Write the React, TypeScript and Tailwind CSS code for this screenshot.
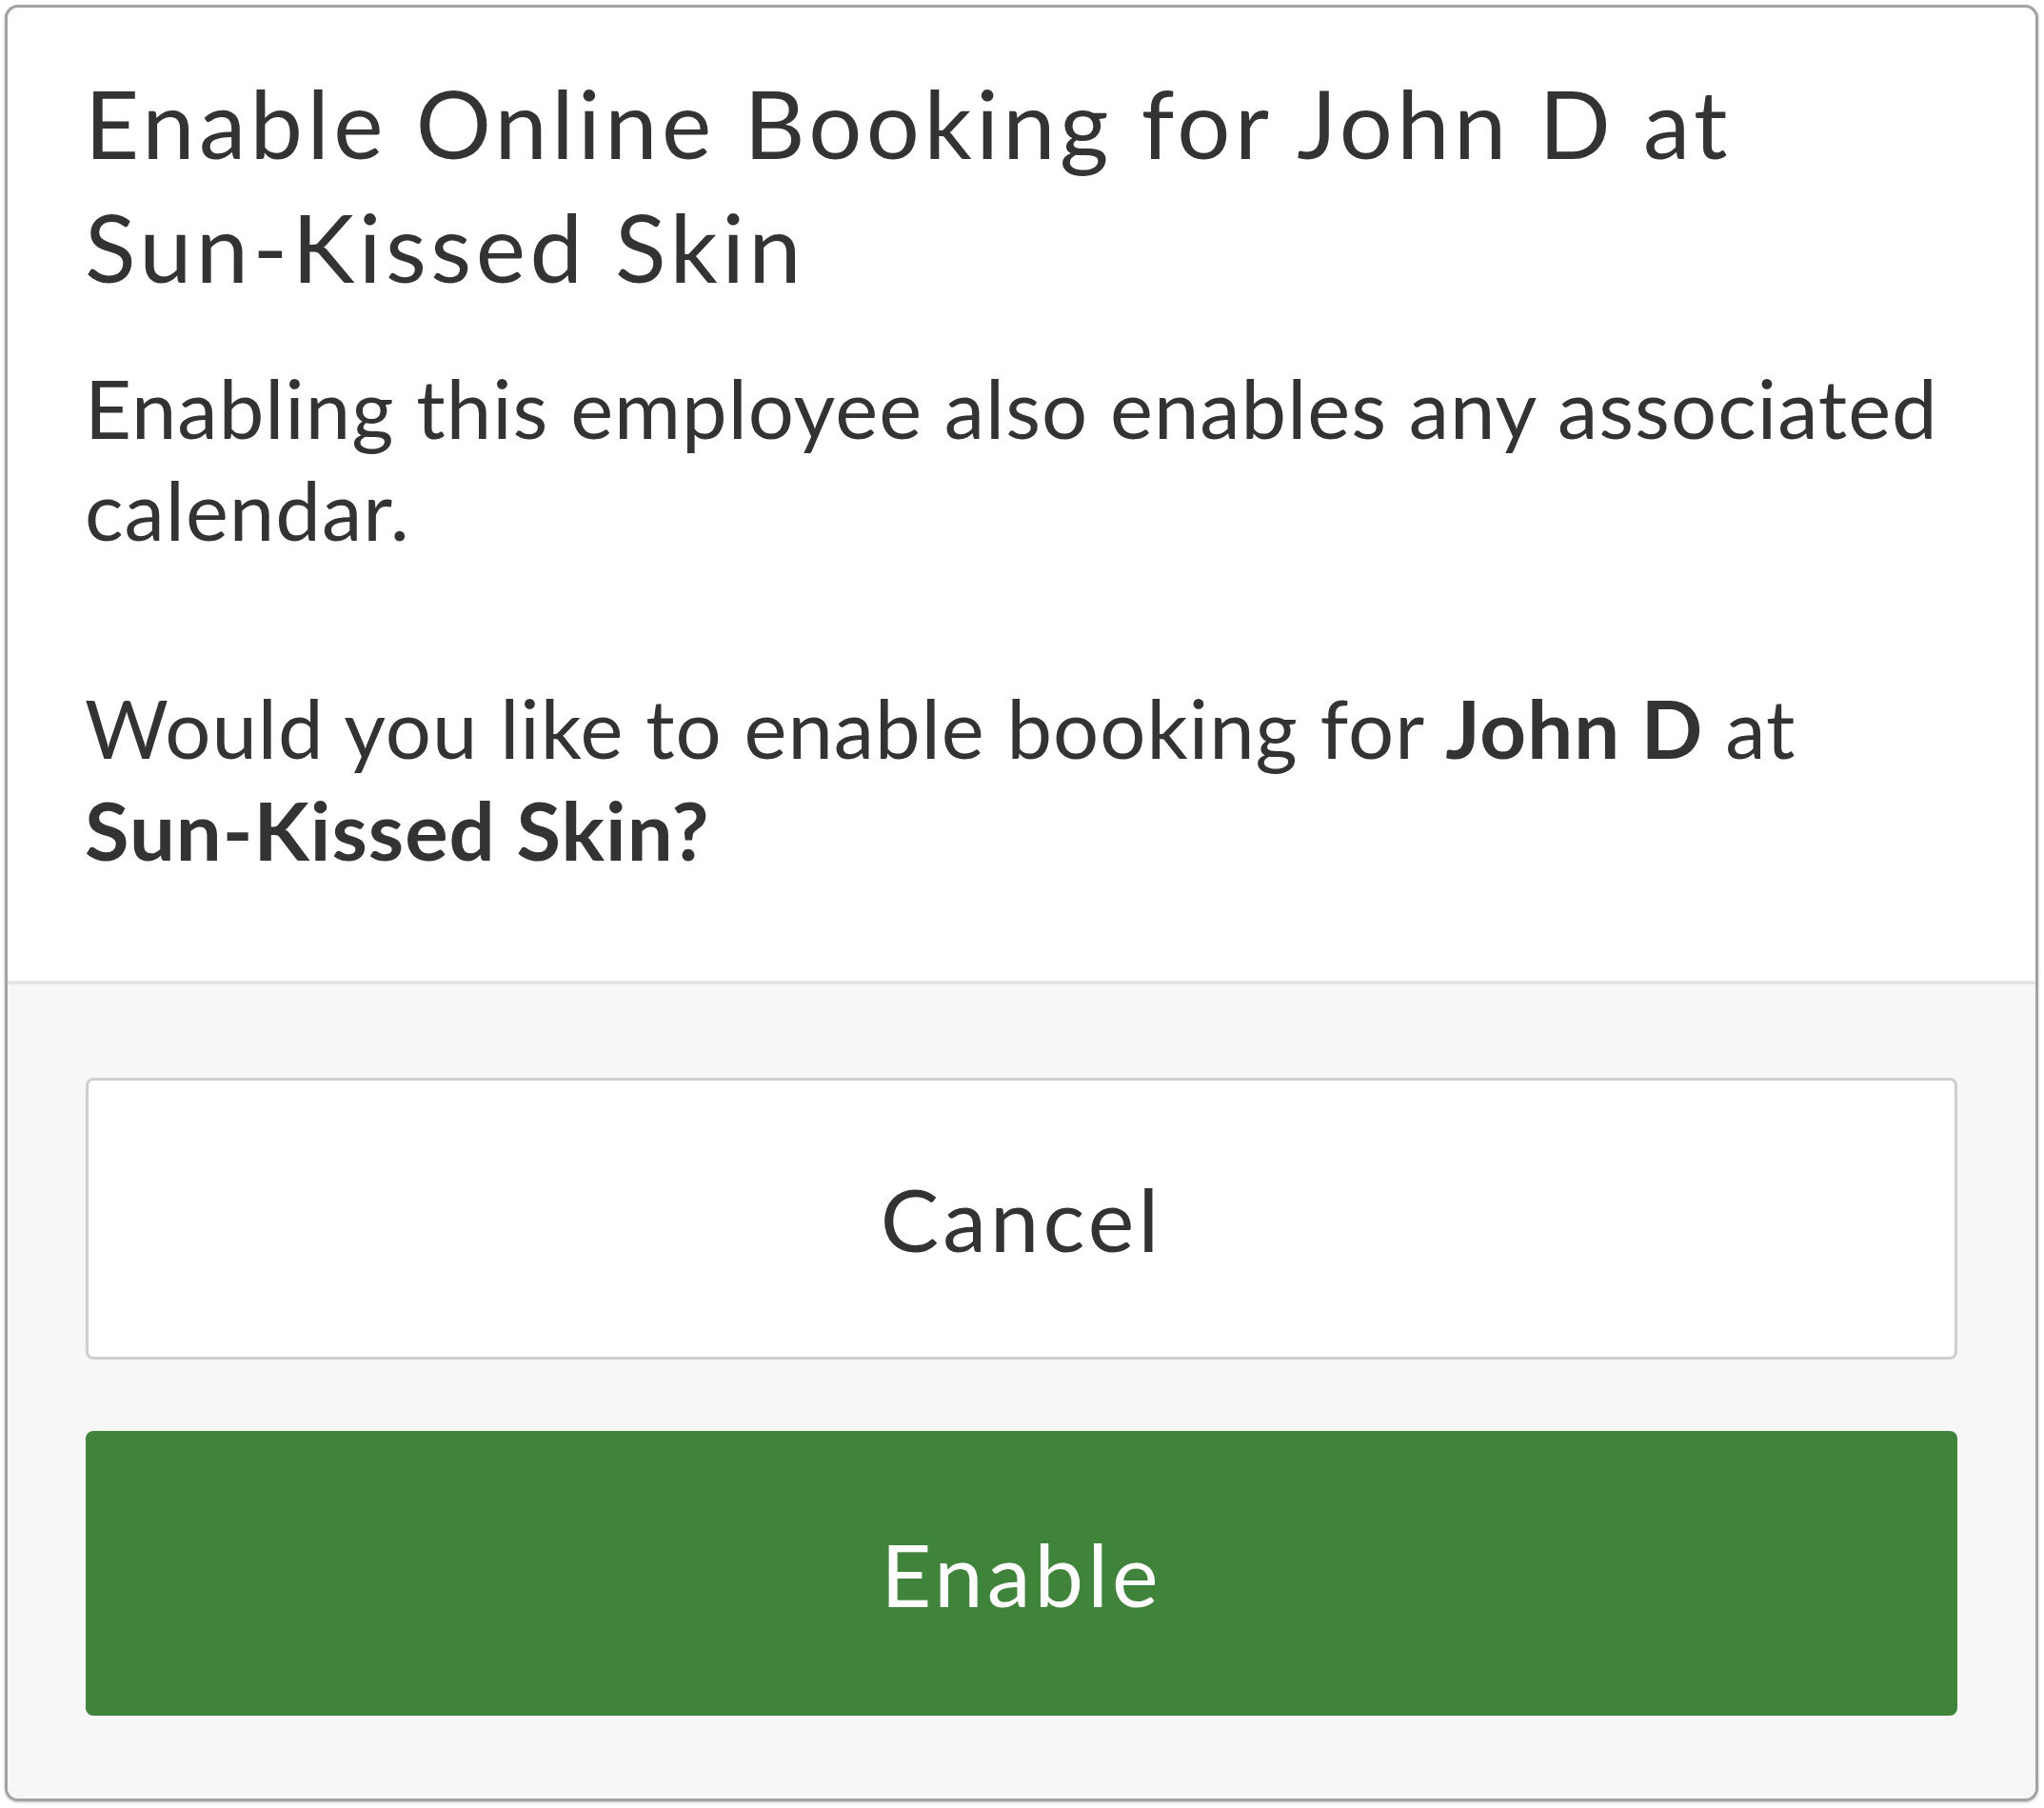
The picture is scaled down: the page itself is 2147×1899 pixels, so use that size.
import React from "react";

const font = { fontFamily: "Lato, 'Open Sans', sans-serif" };

const EnableBookingDialog: React.FC = () => {
  return (
    <div className="min-h-screen bg-white p-[5px]" style={font}>
      <div className="flex h-[1887px] w-[2136px] flex-col overflow-hidden rounded-[14px] border-[3px] border-[#a3a3a3] bg-white shadow-[0_1px_3px_rgba(0,0,0,0.25)]">
        <div className="flex-1 pl-[81px] pr-[60px] pt-[56px] text-[#333333]">
          <h1 className="text-[99px] font-normal leading-[130px] tracking-[0.045em]">
            Enable Online Booking for John D at{" "}
            <span className="whitespace-nowrap">Sun-Kissed Skin</span>
          </h1>
          <p className="mt-[51px] text-[85px] font-normal leading-[107px] tracking-[0.012em]">
            Enabling this employee also enables any associated calendar.
          </p>
          <p className="mt-[122px] text-[85px] font-normal leading-[107px] tracking-[0.012em]">
            Would you like to enable booking for <strong className="font-bold">John D</strong> at{" "}
            <strong className="whitespace-nowrap font-bold">Sun-Kissed Skin?</strong>
          </p>
        </div>
        <div className="flex flex-col gap-[75px] border-t-[4px] border-[#e6e6e6] bg-[#f7f7f7] px-[82px] pt-[98px] pb-[87px]">
          <button className="flex h-[296px] items-center justify-center rounded-[8px] border-[3px] border-[#cfcfcf] bg-white text-[92px] tracking-[0.045em] text-[#333333]">
            Cancel
          </button>
          <button className="flex h-[299px] items-center justify-center rounded-[8px] bg-[#40833a] text-[92px] tracking-[0.045em] text-white">
            Enable
          </button>
        </div>
      </div>
    </div>
  );
};

export default function App() {
  return <EnableBookingDialog />;
}
